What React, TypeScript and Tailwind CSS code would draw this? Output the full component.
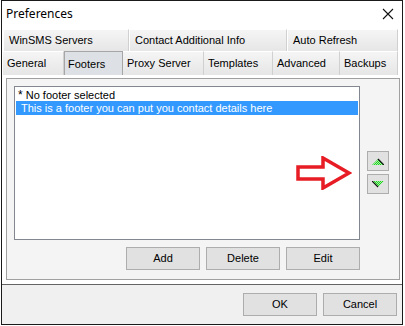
import React from "react";

const rowOne = [
  { label: "WinSMS Servers", w: "w-[126px]" },
  { label: "Contact Additional Info", w: "w-[158px]" },
  { label: "Auto Refresh", w: "w-[111px]" },
];

const rowTwo = [
  { label: "General", w: "w-[61px]" },
  { label: "Footers", w: "w-[59px]", active: true },
  { label: "Proxy Server", w: "w-[81px]" },
  { label: "Templates", w: "w-[69px]" },
  { label: "Advanced", w: "w-[67px]" },
  { label: "Backups", w: "w-[58px]" },
];

function WinButton({ label, className = "" }: { label: string; className?: string }) {
  return (
    <button className={`w-[74px] h-[23px] bg-[#e1e1e1] border border-[#adadad] text-[11px] text-black flex items-center justify-center ${className}`}>
      {label}
    </button>
  );
}

function ArrowButton({ up }: { up?: boolean }) {
  return (
    <button className="w-[22px] h-[20px] bg-[#e1e1e1] border border-[#adadad] flex items-center justify-center">
      <svg width="12" height="7" viewBox="0 0 12 7">
        <defs>
          <pattern id={up ? "dotsUp" : "dotsDown"} width="2" height="2" patternUnits="userSpaceOnUse">
            <rect width="2" height="2" fill="#a6f0a6" />
            <rect width="1" height="1" fill="#22d022" />
            <rect x="1" y="1" width="1" height="1" fill="#22d022" />
          </pattern>
        </defs>
        {up ? (
          <>
            <polygon points="0,7 6,1 12,7" fill="url(#dotsUp)" />
            <line x1="6" y1="1" x2="12" y2="7" stroke="#111" strokeWidth="1.2" />
          </>
        ) : (
          <>
            <polygon points="0,0 12,0 6,6" fill="url(#dotsDown)" />
            <line x1="0" y1="0" x2="6" y2="6" stroke="#111" strokeWidth="1.2" />
          </>
        )}
      </svg>
    </button>
  );
}

export default function App() {
  return (
    <div className="w-[405px] h-[326px] bg-white font-['Liberation_Sans',Arial,sans-serif] text-[11px] text-black">
      <div className="ml-[1px] w-[402px] h-[325px] border border-[#1a1a1a] flex flex-col">
        {/* title bar */}
        <div className="h-[28px] flex items-center justify-between pl-[4px] pr-[8px]">
          <span className="text-[12px] font-['Noto_Sans',sans-serif] leading-none -mt-[3px]">Preferences</span>
          <svg width="12" height="12" viewBox="0 0 12 12" className="-mt-[2px]">
            <path d="M1 1 L11 11 M11 1 L1 11" stroke="#111" strokeWidth="1.1" />
          </svg>
        </div>

        {/* tab rows */}
        <div className="pl-[1px] flex h-[22px]">
          {rowOne.map((t) => (
            <div
              key={t.label}
              className={`${t.w} h-full bg-gradient-to-b from-[#f5f5f5] to-[#e6e6e6] border-t border-white border-r border-r-[#d0d0d0] border-l border-l-white flex items-center pl-[5px]`}
            >
              {t.label}
            </div>
          ))}
        </div>
        <div className="pl-[1px] flex h-[24px]">
          {rowTwo.map((t) =>
            t.active ? (
              <div
                key={t.label}
                className={`${t.w} h-full bg-[#dde0e4] border border-[#a6a6a6] border-b-0 flex items-end pb-[3px] pl-[3px]`}
              >
                {t.label}
              </div>
            ) : (
              <div
                key={t.label}
                className={`${t.w} h-full bg-gradient-to-b from-[#f5f5f5] to-[#e6e6e6] border-t border-white border-r border-r-[#d0d0d0] flex items-center pl-[4px]`}
              >
                {t.label}
              </div>
            )
          )}
        </div>

        {/* tab page */}
        <div className="ml-[4px] mt-[3px] w-[394px] h-[202px] border border-[#a0a0a0] bg-[#f4f4f4] pl-[7px] pt-[7px] flex flex-col">
          <div className="flex">
            <div className="relative w-[346px] h-[154px] bg-white border border-[#828790] pt-[2px] px-[1px]">
              <div className="h-[12px] leading-[12px] pl-[2px]">
                <span className="text-[12px]">*</span> No footer selected
              </div>
              <div className="h-[14px] leading-[14px] bg-[#3399ff] text-white pl-[5px]">
                This is a footer you can put you contact details here
              </div>
              <svg
                width="56"
                height="34"
                viewBox="0 0 56 34"
                className="absolute left-[281px] top-[69px]"
              >
                <polygon
                  points="2,11 27,11 27,2 53,17 27,32 27,23 2,23"
                  fill="none"
                  stroke="#e81c24"
                  strokeWidth="3.5"
                  strokeLinejoin="miter"
                />
              </svg>
            </div>
            <div className="ml-[7px] pt-[65px] flex flex-col gap-[3px]">
              <ArrowButton up />
              <ArrowButton />
            </div>
          </div>
          <div className="w-[346px] mt-[7px] flex justify-end gap-[6px]">
            <WinButton label="Add" />
            <WinButton label="Delete" />
            <WinButton label="Edit" />
          </div>
        </div>

        <div className="mt-[4px] h-[1px] bg-[#646464]" />

        {/* bottom buttons */}
        <div className="flex-1 bg-[#f0f0f0] flex justify-end items-start pt-[8px] pr-[5px] gap-[6px]">
          <WinButton label="OK" />
          <WinButton label="Cancel" />
        </div>
      </div>
    </div>
  );
}
